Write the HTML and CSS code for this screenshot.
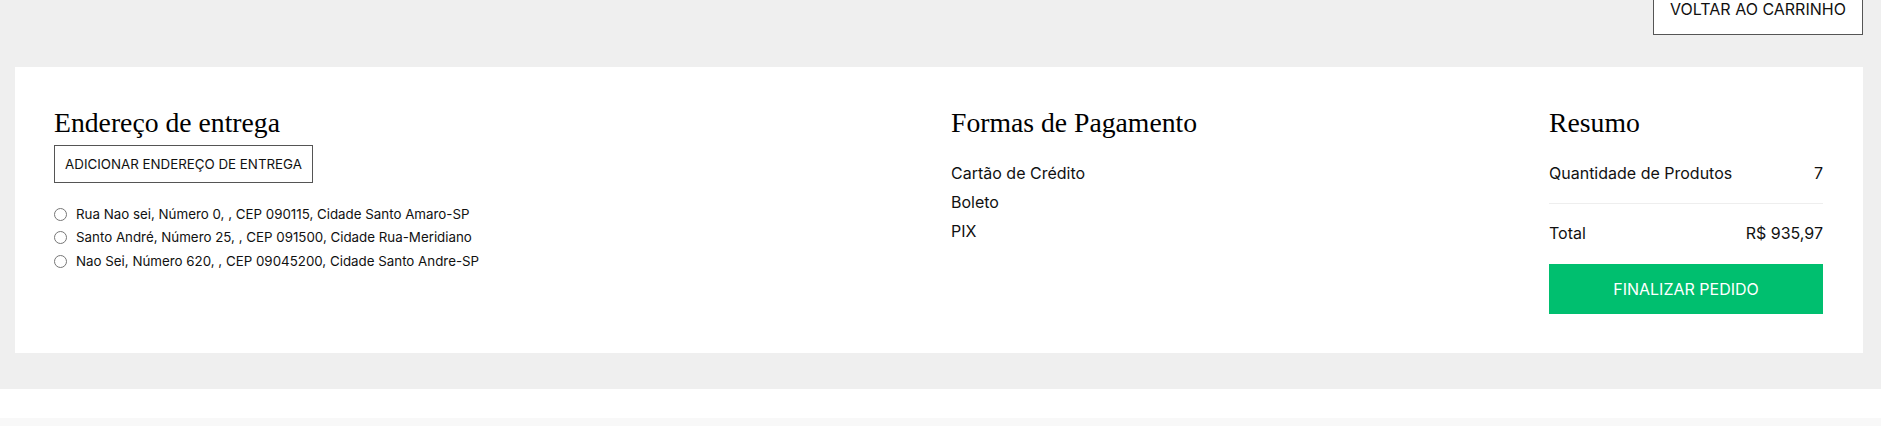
FILE: index.html
```html
<!DOCTYPE html>
<html lang="pt-BR">
<head>
<meta charset="utf-8">
<title>Checkout</title>
<link rel="stylesheet" href="styles.css">
</head>
<body>
<div class="page">
  <div class="topbar">
    <button class="btn-outline btn-back">VOLTAR AO CARRINHO</button>
  </div>
  <main class="panel">
    <section class="col col-address">
      <h2 class="title">Endereço de entrega</h2>
      <button class="btn-outline btn-add">ADICIONAR ENDEREÇO DE ENTREGA</button>
      <ul class="address-list">
        <li class="address"><input type="radio" name="addr" class="radio"><span>Rua Nao sei, Número 0, , CEP 090115, Cidade Santo Amaro-SP</span></li>
        <li class="address"><input type="radio" name="addr" class="radio"><span>Santo André, Número 25, , CEP 091500, Cidade Rua-Meridiano</span></li>
        <li class="address"><input type="radio" name="addr" class="radio"><span>Nao Sei, Número 620, , CEP 09045200, Cidade Santo Andre-SP</span></li>
      </ul>
    </section>
    <section class="col col-payment">
      <h2 class="title">Formas de Pagamento</h2>
      <ul class="payment-list">
        <li>Cartão de Crédito</li>
        <li>Boleto</li>
        <li>PIX</li>
      </ul>
    </section>
    <section class="col col-summary">
      <h2 class="title">Resumo</h2>
      <div class="sum-row sum-first"><span>Quantidade de Produtos</span><span>7</span></div>
      <div class="sum-row sum-total"><span>Total</span><span>R$ 935,97</span></div>
      <button class="btn-finish">FINALIZAR PEDIDO</button>
    </section>
  </main>
</div>
<footer class="footer"></footer>
<div class="subfooter"></div>
</body>
</html>
```
FILE: styles.css
```css
* { box-sizing: border-box; }
html, body { margin: 0; padding: 0; }
body {
  background: #efefef;
  font-family: Inter, "Noto Sans", sans-serif;
  color: #111;
}
.page {
  padding: 0 18px 36px 15px;
}
.topbar {
  display: flex;
  justify-content: flex-end;
  height: 67px;
  padding-bottom: 32px;
}
.btn-outline {
  font-family: Inter, sans-serif;
  background: #fff;
  border: 1px solid #555;
  color: #111;
  cursor: pointer;
}
.btn-back {
  width: 210px;
  height: 35px;
  border-top: 0;
  font-size: 16px;
  line-height: 19px;
  padding: 0 0 16px;
}
.panel {
  background: #fff;
  height: 286px;
  padding: 40px 40px 0 39px;
  display: grid;
  grid-template-columns: 897px 598px 274px;
}
.title {
  font-family: "Liberation Serif", "Times New Roman", serif;
  font-weight: normal;
  font-size: 27.7px;
  line-height: 32px;
  margin: 0;
  color: #000;
}
.btn-add {
  display: block;
  margin-top: 6px;
  width: 259px;
  height: 38px;
  font-size: 13.33px;
  padding: 0;
}
.address-list {
  list-style: none;
  margin: 20px 0 0;
  padding: 0;
}
.address {
  display: flex;
  align-items: center;
  font-size: 13.33px;
  line-height: 23.33px;
}
.radio {
  width: 13px;
  height: 13px;
  margin: 0 9px 0 0;
}
.payment-list {
  list-style: none;
  margin: 22px 0 0;
  padding: 0;
  font-size: 16px;
}
.payment-list li {
  line-height: 24px;
  margin-bottom: 5.2px;
}
.col-summary { font-size: 16px; }
.sum-row {
  display: flex;
  justify-content: space-between;
  line-height: 24px;
}
.sum-first {
  margin-top: 22px;
  padding-bottom: 18px;
  border-bottom: 1px solid #eee;
}
.sum-total { padding-top: 17px; }
.btn-finish {
  display: block;
  margin-top: 19px;
  width: 100%;
  height: 50px;
  border: 0;
  background: #00bf6f;
  color: #fff;
  font-family: Inter, sans-serif;
  font-size: 16px;
  cursor: pointer;
}
.footer {
  height: 29px;
  background: #fff;
}
.subfooter {
  height: 8px;
  background: #f8f8f8;
}
```
